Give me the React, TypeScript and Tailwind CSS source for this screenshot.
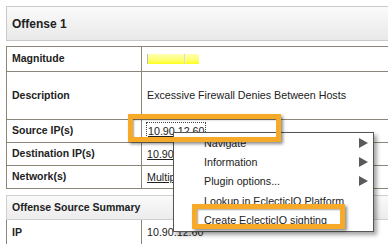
const rows = [
  { label: "Magnitude", h: "h-[25px]", kind: "bar" },
  { label: "Description", h: "h-[48px]", kind: "text", value: "Excessive Firewall Denies Between Hosts" },
  { label: "Source IP(s)", h: "h-[23px]", kind: "focus", value: "10.90.12.60" },
  { label: "Destination IP(s)", h: "h-[23px]", kind: "link", value: "10.90.12.60" },
  { label: "Network(s)", h: "h-[23px]", kind: "link", value: "Multiple (2)" },
];

const menu = [
  { label: "Navigate", sub: true },
  { label: "Information", sub: true },
  { label: "Plugin options...", sub: true },
  { label: "Lookup in EclecticIQ Platform", sub: false },
  { label: "Create EclecticIQ sighting", sub: false },
];

function Arrow() {
  return (
    <svg width="9" height="10" viewBox="0 0 9 10" className="absolute left-[185px]">
      <polygon points="0,0 9,5 0,10" fill="#5a5a5a" />
    </svg>
  );
}

function Value({ row }: { row: (typeof rows)[number] }) {
  if (row.kind === "bar") {
    return (
      <div className="flex h-[10px] w-[52px] border-l border-[#bbb]">
        <div className="w-[37px] border-r border-[#ddd] bg-gradient-to-b from-[#ffffb0] to-[#ffff00]" />
        <div className="flex-1 bg-gradient-to-b from-[#ffffb0] to-[#ffff00]" />
      </div>
    );
  }
  if (row.kind === "focus") {
    return (
      <span className="px-[1px] underline outline-1 outline-dotted outline-[#444]">
        {row.value}
      </span>
    );
  }
  if (row.kind === "link") return <span className="underline">{row.value}</span>;
  return <span>{row.value}</span>;
}

export default function App() {
  return (
    <div className="relative h-[244px] w-[388px] overflow-hidden bg-white font-['Liberation_Sans',Arial,sans-serif] text-[#222]">
      <div className="pl-[6px] pt-[6px]">
        <div className="flex h-[35px] w-[400px] items-center border border-[#c9c9c9] bg-gradient-to-b from-[#fafafa] to-[#e9e9e9] pl-[5px] text-[12px] font-bold">
          Offense 1
        </div>

        <div className="mt-[5px] w-[400px] border-l border-t border-[#8b8678]">
          {rows.map((row) => (
            <div key={row.label} className={`flex ${row.h} border-b border-[#8b8678]`}>
              <div className="flex w-[135px] items-center border-r border-[#8b8678] pl-[5px] text-[10.5px] font-bold">
                {row.label}
              </div>
              <div className="flex flex-1 items-center pl-[5px] text-[10.7px]">
                <Value row={row} />
              </div>
            </div>
          ))}
        </div>

        <div className="mt-[6px] flex h-[25px] w-[400px] items-center border border-[#cfcfcf] bg-gradient-to-b from-[#fafafa] to-[#ececec] pl-[5px] text-[10.5px] font-bold">
          Offense Source Summary
        </div>
        <div className="flex h-[25px] w-[400px] border-l border-[#8b8678]">
          <div className="flex w-[135px] items-center border-r border-[#8b8678] pl-[5px] text-[10.5px] font-bold">
            IP
          </div>
          <div className="flex flex-1 items-center pl-[5px] text-[10.7px]">10.90.12.60</div>
        </div>
      </div>

      {/* context menu */}
      <div className="absolute left-[173px] top-[132px] h-[100px] w-[201px] border border-[#555] bg-white pt-[0px] shadow-[3px_3px_4px_rgba(0,0,0,0.35)]">
        {menu.map((item) => (
          <div key={item.label} className="relative flex h-[19.4px] items-center pl-[30px] text-[10.7px]">
            {item.label}
            {item.sub && <Arrow />}
          </div>
        ))}
      </div>

      {/* annotation boxes */}
      <div className="absolute left-[128px] top-[114px] h-[28px] w-[153px] border-[5px] border-[#f7a928] shadow-[2px_2px_3px_rgba(0,0,0,0.45),inset_1px_1px_2px_rgba(0,0,0,0.35)]" />
      <div className="absolute left-[192px] top-[204px] h-[25px] w-[153px] border-[5px] border-[#f7a928] shadow-[2px_2px_3px_rgba(0,0,0,0.45),inset_1px_1px_2px_rgba(0,0,0,0.35)]" />
    </div>
  );
}
